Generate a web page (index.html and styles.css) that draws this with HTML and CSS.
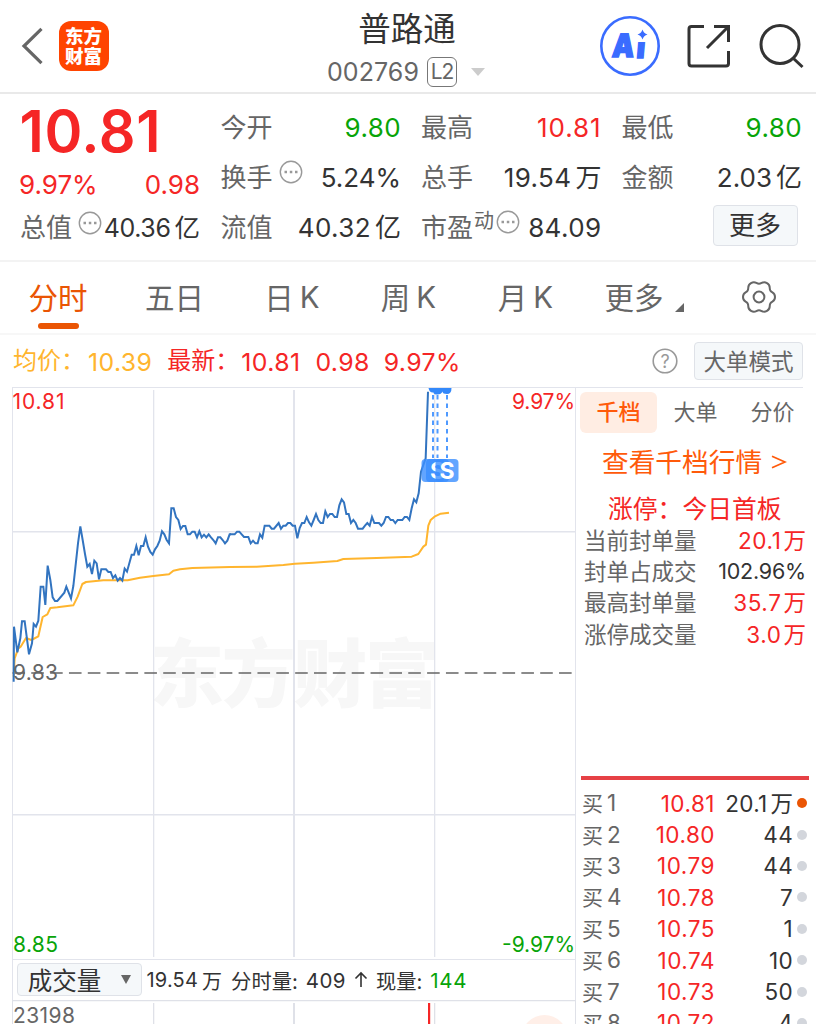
FILE: index.html
```html
<!DOCTYPE html>
<html lang="zh-CN">
<head>
<meta charset="utf-8">
<title>普路通 002769</title>
<link rel="stylesheet" href="styles.css">
</head>
<body>
<div class="app">
  <header class="header">
    <div class="nav-left">
      <svg class="back" width="22" height="38" viewBox="0 0 22 38"><path d="M20.500 1.800L3 19l17.500 17.200" fill="none" stroke="#666" stroke-width="3.200"/></svg>
      <div class="logo"><span>东方</span><span>财富</span></div>
    </div>
    <div class="title">
      <h1>普路通</h1>
      <div class="code"><span>002769</span><span class="l2">L2</span><svg width="14" height="8" viewBox="0 0 14 8"><path d="M0 0h14L7 8z" fill="#ccc"/></svg></div>
    </div>
    <div class="nav-right">
      <svg width="60" height="60" viewBox="0 0 60 60">
        <circle cx="30" cy="30" r="28.700" fill="none" stroke="#3a6cff" stroke-width="2.600"/>
        <g class="ai"><text transform="translate(11.500 40.500) skewX(-5)" textLength="22" lengthAdjust="spacingAndGlyphs">A</text><text transform="translate(36 42) skewX(-5)" class="ai-i">ı</text></g>
        <path d="M42.500 13.500q1.200 3.800 5 5-3.800 1.200-5 5-1.200-3.800-5-5 3.800-1.200 5-5z" fill="#3a6cff"/>
      </svg>
      <svg width="44" height="44" viewBox="0 0 44 44" fill="none" stroke="#333" stroke-width="3"><path d="M17 2.500H4.500Q2 2.500 2 5V39.500q0 2.500 2.500 2.500H39q2.500 0 2.500-2.500V27M27 2.500h14.500v15.500M41 3L20 24"/></svg>
      <svg width="46" height="46" viewBox="0 0 46 46" fill="none" stroke="#333" stroke-width="3"><circle cx="22" cy="21.500" r="19"/><path d="M35 35l9.500 9"/></svg>
    </div>
  </header>

  <section class="quote">
    <div class="quote-main">
      <div class="price">10.81</div>
      <div class="cell red change"><span>9.97%</span><span>0.98</span></div>
      <div class="cell cap"><label>总值</label><svg class="info" viewBox="0 0 24 24"><circle cx="12" cy="12" r="10.700"/><path d="M5.500 12h2.500M10.800 12h2.500M16 12h2.500"/></svg><b>40.36<i>亿</i></b></div>
    </div>
    <div class="stats">
      <div class="cell"><label>今开</label><b class="green">9.80</b></div>
      <div class="cell"><label>最高</label><b class="red wide">10.81</b></div>
      <div class="cell"><label>最低</label><b class="green">9.80</b></div>
      <div class="cell"><label>换手</label><svg class="info" viewBox="0 0 24 24"><circle cx="12" cy="12" r="10.700"/><path d="M5.500 12h2.500M10.800 12h2.500M16 12h2.500"/></svg><b class="pc">5.24%</b></div>
      <div class="cell"><label>总手</label><b>19.54<i>万</i></b></div>
      <div class="cell"><label>金额</label><b class="pc">2.03<i>亿</i></b></div>
      <div class="cell"><label>流值</label><b>40.32<i>亿</i></b></div>
      <div class="cell pe"><label>市盈<sup>动</sup></label><svg class="info" viewBox="0 0 24 24"><circle cx="12" cy="12" r="10.700"/><path d="M5.500 12h2.500M10.800 12h2.500M16 12h2.500"/></svg><b>84.09</b></div>
      <div class="cell end"><button class="btn more">更多</button></div>
    </div>
  </section>

  <nav class="tabs">
    <span class="active">分时</span><span>五日</span><span>日<em>K</em></span><span>周<em>K</em></span><span class="month">月<em>K</em></span>
    <span>更多<svg class="corner" width="9" height="9" viewBox="0 0 9 9"><path d="M9 0v9H0z" fill="#666"/></svg></span>
    <svg class="gear" width="36" height="34" viewBox="-18 -17 36 34" fill="none" stroke="#666" stroke-width="2"><circle r="5.400"/><path d="M16 0C16 5 12.800 3.900 11.300 6.500 9.800 9.100 12.300 11.400 8 13.900 3.700 16.400 3 13.300 0 13.300-3 13.300-3.700 16.400-8 13.900-12.300 11.400-9.800 9.100-11.300 6.500-12.800 3.900-16 5-16 0-16-5-12.800-3.900-11.300-6.500-9.800-9.100-12.300-11.400-8-13.900-3.700-16.400-3-13.300 0-13.300 3-13.300 3.700-16.400 8-13.900 12.300-11.400 9.800-9.100 11.300-6.500 12.800-3.900 16-5 16 0Z"/></svg>
  </nav>

  <div class="summary">
    <span class="avg">均价：</span><span class="avg num n1">10.39</span><span class="red">最新：</span><span class="red num n2">10.81</span><span class="red num n3">0.98</span><span class="red num">9.97%</span>
    <svg class="help" width="26" height="26" viewBox="0 0 26 26"><circle cx="13" cy="13" r="11.800" fill="none" stroke="#999" stroke-width="1.600"/><text x="13" y="19.500" text-anchor="middle">?</text></svg>
    <button class="btn mode">大单模式</button>
  </div>

  <main class="main">
    <div class="chart">
      <svg class="plot" width="564" height="573" viewBox="12 387 564 573">
        <text class="watermark" x="150" y="701" textLength="289">东方财富</text>
        <g fill="#e2e4ec"><path d="M12 387h564v1H12zM12 387h1v573h-1zM575 387h1v573h-1zM153 390h1.300v567H153zM293 390h2v567h-2zM434 390h1.300v567H434zM12 531h564v1.500H12zM12 814h564v1.500H12zM12 959h564v1H12z"/></g>
        <path d="M12.400 673H573" stroke="#666" stroke-width="1.300" stroke-dasharray="12.600 6.250"/>
        <g fill="none" stroke="#ffb52e" stroke-width="6" stroke-linejoin="round">
          <path transform="translate(0 480) scale(.33333)" d="M41 590L44 535 55 505 62 500 78 474 94 480 115 469 128 411 142 403 151 384 172 382 220 376 233 350 247 312 258 306 310 301 383 301 420 293 460 288 507 283 520 272 540 268 577 264 690 261"/>
          <path transform="translate(230 380) scale(.33333)" d="M0 561L80 560 160 555 195 551 250 548 322 543 340 537 440 534 545 530 565 522 580 500 588 494 595 437 602 420 615 409 632 401 657 398"/>
        </g>
        <g fill="none" stroke="#3274c0" stroke-width="6">
          <path transform="translate(0 480) scale(.33333)" d="M41 605L42 440 52 517 61 475 66 424 74 424 87 523 96 490 101 432 108 440 115 422 122 320 130 320 136 375 143 257 151 300 158 352 165 363 172 363 193 338 199 320 213 355 220 318 234 190 241 139 248 180 255 222 262 260 269 252 276 282 283 242 290 250 297 298 304 268 318 268 325 276 332 276 339 294 346 286 353 302 360 294 367 302 374 266 381 275 395 224 402 224 409 198 416 226 423 198 430 198 437 172 444 200 451 216 458 224 465 208 472 198 479 182 486 154 493 163 500 180 507 190 514 85 521 85 528 111 535 120 542 147 549 138 556 138 563 163 570 163 577 155 584 155 591 172 598 154 605 172 612 164 619 172 626 163 633 172 640 180 647 190 654 172 661 172 668 180 675 190 682 182 689 163 693 163"/>
          <path transform="translate(230 380) scale(.33333)" d="M0 463H14L21 455H28L35 463 42 471H55L62 490 69 482 76 490H83L90 463 97 473 104 437H118L125 446H132L146 429 153 446 160 437H167L174 429H181L188 437H195L202 475 209 444 216 429H223L230 411 237 427 244 437 251 420 258 402 265 420 272 429H279L286 394 293 411 300 402H307L314 411H321L328 376 335 358 342 367 349 402H356L363 429 370 420 377 429 384 446H398L405 437 412 429 419 437 426 411 433 429H447L454 437 461 429 468 411H475L482 420H489L496 429 503 420H517L524 411H531L538 420 545 385 552 358 559 367 566 340 573 275 587 235 594 35"/>
        </g>
        <g class="marks">
          <path d="M428.500 388h23q0 6-4.500 6t-4.500-2.500q-1.200 3-5 3t-4-2q-4 .5-5-4.500z" fill="#3388fa"/>
          <path d="M433 395v63M437.500 395v63M447 395v63" stroke="#4f9aff" stroke-width="2" stroke-dasharray="4.500 4"/>
          <g fill="#3b8fff" fill-opacity=".8"><rect x="421.500" y="459" width="23" height="23" rx="4"/><rect x="426" y="459" width="23" height="23" rx="4"/><text x="430" y="478.500">S</text><rect x="435.500" y="459" width="23" height="23" rx="4"/><text x="439.500" y="478.500">S</text></g>
        </g>
        <g class="axis">
          <text x="12.500" y="408.500" fill="#f52626" textLength="52">10.81</text>
          <text x="512" y="408.500" fill="#f52626" textLength="63">9.97%</text>
          <text x="13" y="680" fill="#666" textLength="45">9.83</text>
          <text x="13" y="951.500" fill="#08a408" textLength="45">8.85</text>
          <text x="502" y="951.500" fill="#08a408" textLength="73">-9.97%</text>
        </g>
      </svg>
      <div class="indicator">
        <button class="btn pick">成交量<svg width="10" height="9" viewBox="0 0 10 9"><path d="M0 0h10L5 9z" fill="#666"/></svg></button>
        <span class="v1">19.54</span><span class="w">万</span><span class="lb">分时量:</span><span class="v2">409</span><svg class="up" width="14" height="18" viewBox="0 0 14 18"><path d="M7 16V2M1.500 7.500L7 2l5.500 5.500" fill="none" stroke="#333" stroke-width="1.600"/></svg><span class="lb">现量:</span><span class="green v3">144</span>
      </div>
      <svg class="volume" width="564" height="24" viewBox="12 1000 564 24">
        <path fill="#dfe1e8" d="M12 1000h564v1.200H12zM12 1000h1v24h-1zM575 1000h1v24h-1zM153 1003h1.300v21H153zM293 1003h2v21h-2zM434 1003h1.300v21H434z"/>
        <circle cx="544.500" cy="1038" r="23" fill="#ffefe8"/>
        <path d="M428 1003h2.200v21H428z" fill="#f52626"/>
        <text x="13" y="1023" fill="#666" textLength="62">23198</text>
      </svg>
    </div>

    <aside class="side">
      <div class="side-tabs"><span class="on">千档</span><span>大单</span><span>分价</span></div>
      <div class="link"><span>查看千档行情</span><svg width="16" height="14" viewBox="0 0 16 14"><path d="M1 1.200l13 5.800-13 5.800" fill="none" stroke="#ff5a0a" stroke-width="1.800"/></svg></div>
      <div class="limit">涨停：今日首板</div>
      <dl class="seal">
        <dt>当前封单量</dt><dd class="red">20.1<i>万</i></dd>
        <dt>封单占成交</dt><dd class="pct">102.96%</dd>
        <dt>最高封单量</dt><dd class="red">35.7<i>万</i></dd>
        <dt>涨停成交量</dt><dd class="red">3.0<i>万</i></dd>
      </dl>
      <div class="bids">
        <div class="bid hot"><span>买<em>1</em></span><span>10.81</span><span>20.1<i>万</i></span></div>
        <div class="bid"><span>买<em>2</em></span><span>10.80</span><span>44</span></div>
        <div class="bid"><span>买<em>3</em></span><span>10.79</span><span>44</span></div>
        <div class="bid"><span>买<em>4</em></span><span>10.78</span><span>7</span></div>
        <div class="bid"><span>买<em>5</em></span><span>10.75</span><span>1</span></div>
        <div class="bid"><span>买<em>6</em></span><span>10.74</span><span>10</span></div>
        <div class="bid"><span>买<em>7</em></span><span>10.73</span><span>50</span></div>
        <div class="bid"><span>买<em>8</em></span><span>10.72</span><span>4</span></div>
      </div>
    </aside>
  </main>
</div>
</body>
</html>
```
FILE: styles.css
```css
* { box-sizing: border-box; margin: 0; padding: 0; }
body { font-family: Inter, "Noto Sans CJK SC", sans-serif; background: #fff; color: #333; overflow: hidden; }
i, em, b { font-style: normal; font-weight: 400; }
svg { display: block; flex: none; }
.app { width: 816px; height: 1024px; overflow: hidden; display: flex; flex-direction: column; }
.red { color: #f52626; }
.green { color: #08a408 !important; }
.btn { font: inherit; color: #333; background: #f5f8fa; border: 1px solid #dfe2e8; border-radius: 4px; display: flex; align-items: center; justify-content: center; white-space: nowrap; flex: none; }

.header { height: 94px; flex: none; border-bottom: 2px solid #e9e9e9; display: grid; grid-template-columns: 248px 1fr 250px; grid-template-rows: 92px; }
.nav-left { display: flex; align-items: center; padding-left: 21px; gap: 15.500px; }
.logo { width: 50px; height: 50px; border-radius: 12px; background: #ff4400; color: #fff; font-weight: 900; font-size: 18.500px; line-height: 20.500px; display: flex; flex-direction: column; align-items: center; justify-content: center; }
.title { display: flex; flex-direction: column; align-items: center; padding-top: 9px; }
.title h1 { font-weight: 400; font-size: 32.500px; line-height: 42px; }
.code { display: flex; align-items: center; height: 42px; font-size: 25px; color: #666; margin-left: -2px; }
.code > span:first-child { letter-spacing: 0.100px; }
.l2 { border: 1.500px solid #777; border-radius: 6px; width: 30px; height: 30px; font-size: 21px; line-height: 27px; text-align: center; margin: 0 14px 0 8px; letter-spacing: -1px; }
.nav-right { display: flex; align-items: center; justify-content: flex-end; gap: 27px; padding-right: 12px; }
.ai text { font-weight: 900; font-size: 32px; fill: #3a6cff; stroke: #3a6cff; stroke-width: 1.500px; }
.ai .ai-i { font-size: 28px; }

.quote { height: 168px; flex: none; border-bottom: 2px solid #f3f3f3; padding: 8.500px 14px 0 20px; display: grid; grid-template-columns: 180px 1fr; column-gap: 20.500px; }
.price { font-weight: 600; font-size: 57.500px; line-height: 56px; color: #f52626; letter-spacing: 0.600px; height: 57px; margin-left: -0.500px; }
.cell { display: flex; align-items: center; height: 50px; font-size: 26px; line-height: 36px; white-space: nowrap; }
.cell label { color: #666; }
.cell b { margin-left: auto; letter-spacing: 0.400px; }
.cell b.wide { letter-spacing: 0.900px; }
.cell b.pc { letter-spacing: 0; }
.cell b i { margin-left: 4px; letter-spacing: 0; }
.change { justify-content: space-between; height: 50px; margin-left: -1px; }
.cap { height: 37px; font-size: 25px; }
.cap label { font-size: 26px; }
.cell.cap b { letter-spacing: -0.400px; }
.cap b i { font-size: 25.500px; }
.cap .info { margin-left: 5.500px; }
.info { width: 24px; height: 24px; margin: -11px 0 0 6px; fill: none; stroke: #999; stroke-width: 1.400; }
.info path { stroke-width: 2.300; }
.stats { display: grid; grid-template-columns: repeat(3, 180.500px); column-gap: 20px; grid-auto-rows: 50px; }
.pe sup { font-size: 20px; line-height: 20px; vertical-align: 8.500px; margin-left: 1px; }
.pe .info { margin-left: 2px; }
.end { justify-content: flex-end; padding-right: 4.500px; }
.more { width: 85px; height: 41px; font-size: 26px; margin-top: -4px; }

.tabs { height: 73px; flex: none; border-bottom: 2px solid #f7f7f7; display: grid; grid-template-columns: 116px 117px 118px 115px 117px 122px 106px; color: #666; font-size: 29.500px; align-items: center; }
.tabs span { position: relative; display: flex; align-items: center; justify-content: center; height: 71px; padding-bottom: 4px; }
.tabs em { margin-left: 6px; padding-top: 2px; }
.tabs .month { padding-left: 2px; }
.tabs .active { color: #ea5504; }
.tabs .active::after { content: ""; position: absolute; left: 38px; bottom: 4px; width: 41px; height: 6px; border-radius: 3px; background: #ea5504; }
.corner { margin: 24px 0 0 11px; }
.gear { justify-self: center; margin: 0 0 1px 1px; }

.summary { height: 52px; flex: none; display: flex; align-items: center; padding: 0 13px; font-size: 24px; white-space: nowrap; }
.summary > span { margin-top: 0; line-height: 34px; }
.summary .avg { color: #ffb52e; }
.summary .num { font-size: 24.800px; letter-spacing: 0.400px; margin-top: 1px; }
.n1 { margin: 0 15px 0 3px; }
.n2 { margin: 0 15px 0 2px; }
.n3 { margin-right: 14px; }
.help { margin-left: auto; margin-right: 16px; }
.help text { font-size: 18px; fill: #999; }
.mode { width: 109px; height: 38px; font-size: 22.500px; color: #666; padding-bottom: 2px; }

.main { display: flex; height: 637px; flex: none; padding-left: 12px; }
.chart { width: 564px; flex: none; }
.plot text, .volume text { font-size: 21px; }
.plot .watermark { font-size: 74px; font-weight: 900; fill: #f7f7f7; }
.plot .marks text { font-size: 23px; font-weight: 700; fill: #fff; fill-opacity: 1; }
.indicator { height: 40px; display: flex; align-items: center; font-size: 20px; padding-left: 4px; border: solid #e2e4ec; border-width: 0 1px; white-space: nowrap; }
.pick { width: 125px; height: 33px; font-size: 24.500px; gap: 20px; margin-right: 4.500px; padding-bottom: 1px; margin-top: -1px; }
.lb { font-size: 20.300px; }
.v1 { letter-spacing: 0.200px; }
.w { margin: 0 9px 0 4px; }
.v2 { margin: 0 8px; font-size: 20.500px; letter-spacing: 0.400px; }
.up { margin-right: 8px; }
.v3 { margin-left: 8px; font-size: 20.500px; letter-spacing: 0.700px; }

.side { width: 240px; flex: none; }
.side::before { content: ""; display: block; width: 227px; border-top: 1px solid #e2e4ec; margin-bottom: 3px; }
.side-tabs { display: flex; height: 42px; align-items: center; padding-left: 4px; font-size: 22px; color: #666; }
.side-tabs span { width: 77px; text-align: center; line-height: 41px; }
.side-tabs .on { background: #ffede3; color: #ff5a0a; border-radius: 6px; font-weight: 500; }
.link { display: flex; align-items: center; height: 54px; padding: 0 0 0 26px; gap: 9px; color: #ff5a0a; font-size: 26.700px; }
.link svg { margin-top: 3px; }
.limit { color: #f52626; font-size: 24.800px; line-height: 40px; padding: 2px 0 0 32px; white-space: nowrap; }
.seal { display: grid; grid-template-columns: 1fr auto; grid-auto-rows: 31.300px; align-items: center; padding: 0 10px 0 8px; font-size: 22.500px; line-height: 31px; margin-top: -4.500px; }
.seal dt { color: #666; }
.seal dd { text-align: right; letter-spacing: 0.600px; }
.seal i { margin-left: 2px; letter-spacing: 0; }
.seal .pct { font-size: 21.500px; letter-spacing: -0.200px; }
.bids { border-top: 4px solid #e64145; margin: 126.500px 7px 0 5px; padding-top: 7px; }
.bid { display: grid; grid-template-columns: 60px 74px 78px 10px; align-items: center; height: 31.400px; line-height: 31px; font-size: 22.500px; white-space: nowrap; }
.bid span:first-child { color: #666; font-size: 21px; padding-left: 1px; }
.bid span:first-child em { font-size: 22.500px; margin-left: 4px; }
.bid span:nth-child(2) { color: #f52626; text-align: right; letter-spacing: 0.500px; }
.bid span:nth-child(3) { text-align: right; letter-spacing: 0.300px; }
.bid span i { margin-left: 3px; letter-spacing: 0; }
.bid::after { content: ""; width: 10px; height: 10px; border-radius: 5px; background: #d3d6dc; margin-left: 4px; }
.bid.hot::after { background: #ea5504; }
```
